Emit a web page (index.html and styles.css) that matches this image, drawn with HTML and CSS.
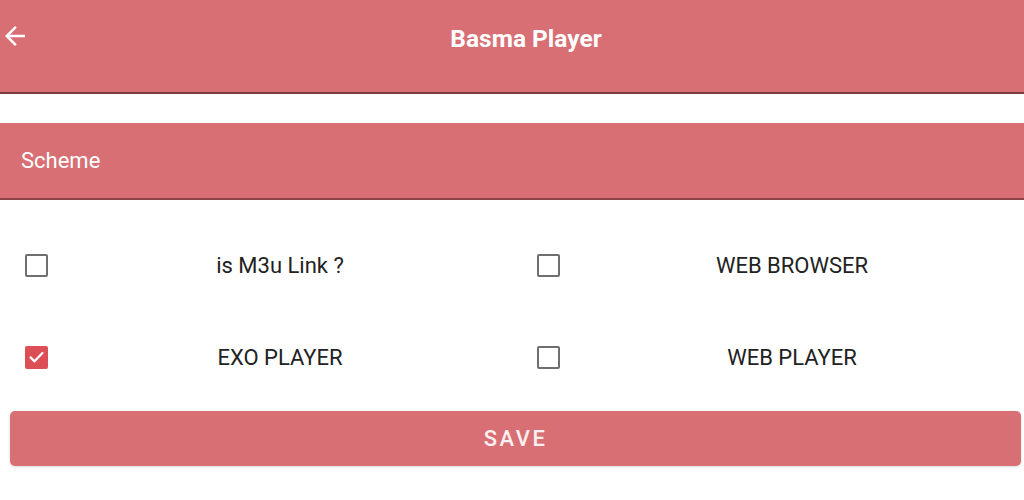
FILE: index.html
```html
<!DOCTYPE html>
<html>
<head>
<meta charset="utf-8">
<link rel="stylesheet" href="styles.css">
</head>
<body>
<div class="page">
  <header class="topbar">
    <svg class="back" width="30" height="30" viewBox="0 0 24 24"><path d="M20 11H7.83l5.59-5.59L12 4l-8 8 8 8 1.41-1.41L7.83 13H20v-2z" fill="#fff"/></svg>
    <h1 class="title">Basma Player</h1>
  </header>
  <div class="spacer"></div>
  <div class="scheme">Scheme</div>
  <div class="options">
    <label class="opt"><span class="box"></span><span class="lbl">is M3u Link ?</span></label>
    <label class="opt"><span class="box"></span><span class="lbl">WEB BROWSER</span></label>
    <label class="opt"><span class="box checked"><svg width="20" height="20" viewBox="0 0 24 24"><path d="M4.5 12.5l5 5L19.5 7" fill="none" stroke="#fff" stroke-width="2.8" stroke-linecap="round" stroke-linejoin="round"/></svg></span><span class="lbl">EXO PLAYER</span></label>
    <label class="opt"><span class="box"></span><span class="lbl">WEB PLAYER</span></label>
  </div>
  <div class="actions">
    <button class="save">SAVE</button>
  </div>
</div>
</body>
</html>
```
FILE: styles.css
```css
html, body { margin: 0; padding: 0; background: #fff; }
body { font-family: Roboto, "Noto Sans", sans-serif; width: 1024px; height: 500px; overflow: hidden; }
.page { display: flex; flex-direction: column; }
.topbar {
  height: 92px;
  background: #d76f75;
  border-top: 2px solid #7a3a3e;
  border-bottom: 2px solid #7a3a3e;
  display: flex; align-items: center; justify-content: center;
  position: relative;
  box-sizing: content-box;
  margin-top: -2px;
}
.back { position: absolute; left: 0; top: 21px; }
.title { margin: 0; font-size: 24.5px; font-weight: 700; color: #fff; transform: translate(14px, -8px); }
.spacer { height: 29px; }
.scheme {
  height: 75px;
  background: #d76f75;
  border-bottom: 2px solid #8b4449;
  color: #fff;
  font-size: 22px;
  display: flex; align-items: center;
  padding-left: 21px;
}
.options {
  display: grid;
  grid-template-columns: 512px 512px;
  grid-auto-rows: 92px;
  padding-top: 19px;
}
.opt { display: flex; align-items: center; padding-left: 25px; }
.box {
  width: 19px; height: 19px;
  border: 2px solid #6f6f6f;
  border-radius: 2px;
  display: flex; align-items: center; justify-content: center;
  flex: none;
}
.box.checked { background: #dd4f56; border-color: #dd4f56; }
.lbl { flex: 1; text-align: center; font-size: 22px; color: #222; }
.actions { padding: 8px 3px 0 10px; }
.save {
  width: 100%; height: 55px;
  background: #d76f75;
  border: none; border-radius: 5px;
  box-shadow: 0 1px 3px rgba(0,0,0,0.15);
  color: #fdf0f0;
  font-family: Roboto, sans-serif;
  font-size: 22px; font-weight: 500;
  letter-spacing: 2.5px;
  padding: 0;
}
```
